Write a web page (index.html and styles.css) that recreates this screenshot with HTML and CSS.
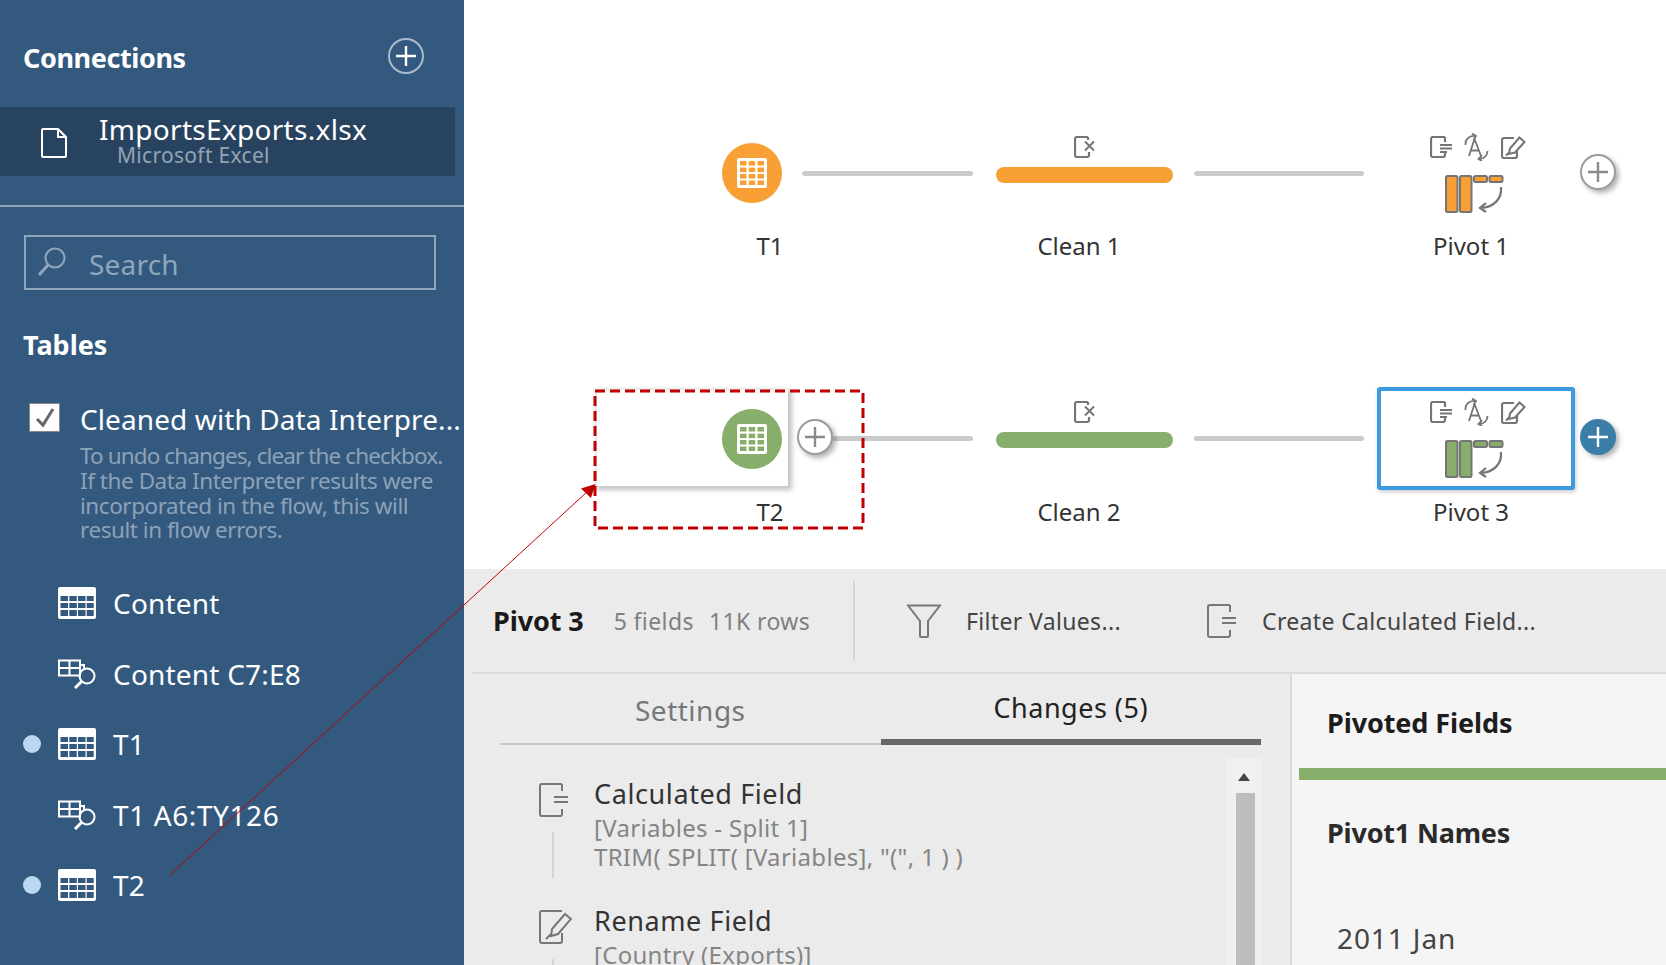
FILE: index.html
```html
<!DOCTYPE html>
<html lang="en">
<head>
  <meta charset="UTF-8" />
  <title>Flow - Pivot 3</title>
  <link rel="stylesheet" href="styles.css">
</head>
<body>
  <svg class="defs" width="0" height="0">
    <symbol id="i-grid" viewBox="0 0 30 30">
      <rect width="30" height="30" rx="2" fill="#fff"/>
      <g fill="currentColor">
        <rect x="3" y="3" width="6.5" height="4.5"/><rect x="11.7" y="3" width="6.5" height="4.5"/><rect x="20.5" y="3" width="6.5" height="4.5"/>
        <rect x="3" y="9.6" width="6.5" height="4.5"/><rect x="11.7" y="9.6" width="6.5" height="4.5"/><rect x="20.5" y="9.6" width="6.5" height="4.5"/>
        <rect x="3" y="16" width="6.5" height="4.5"/><rect x="11.7" y="16" width="6.5" height="4.5"/><rect x="20.5" y="16" width="6.5" height="4.5"/>
        <rect x="3" y="22.5" width="6.5" height="4.5"/><rect x="11.7" y="22.5" width="6.5" height="4.5"/><rect x="20.5" y="22.5" width="6.5" height="4.5"/>
      </g>
    </symbol>
    <symbol id="i-table" viewBox="0 0 38 32">
      <rect width="38" height="32" rx="2" fill="#fff"/>
      <g fill="#34597f">
        <rect x="2.5" y="9" width="7.5" height="5"/><rect x="11.3" y="9" width="7.5" height="5"/><rect x="20" y="9" width="7.5" height="5"/><rect x="28.7" y="9" width="7" height="5"/>
        <rect x="2.5" y="16" width="7.5" height="5"/><rect x="11.3" y="16" width="7.5" height="5"/><rect x="20" y="16" width="7.5" height="5"/><rect x="28.7" y="16" width="7" height="5"/>
        <rect x="2.5" y="23" width="7.5" height="6"/><rect x="11.3" y="23" width="7.5" height="6"/><rect x="20" y="23" width="7.5" height="6"/><rect x="28.7" y="23" width="7" height="6"/>
      </g>
    </symbol>
    <symbol id="i-range" viewBox="0 0 38 30">
      <g fill="none" stroke="#fff" stroke-width="2">
        <path d="M1 1.500h21v15H1zM1 9h21M11.500 1.500v15"/>
        <path d="M22 6h4v3"/>
        <circle cx="29" cy="17" r="7.500"/>
        <path d="M23.500 22.500L17 29" stroke-width="3"/>
      </g>
    </symbol>
    <symbol id="i-calc" viewBox="0 0 22 22">
      <path d="M15 1H3a2 2 0 0 0-2 2v16a2 2 0 0 0 2 2h10a2 2 0 0 0 2-2v-2M15 1v5" fill="none" stroke="currentColor" stroke-width="2.200"/>
      <path d="M10 9h12M10 12.500h12M10 16h7" fill="none" stroke="currentColor" stroke-width="1.800"/>
    </symbol>
    <symbol id="i-clean" viewBox="0 0 22 22">
      <path d="M14 1H3a2 2 0 0 0-2 2v16a2 2 0 0 0 2 2h10a2 2 0 0 0 2-2v-3M14 1v3" fill="none" stroke="currentColor" stroke-width="2.200"/>
      <path d="M11 5.500l9 9M20 5.500l-9 9" fill="none" stroke="currentColor" stroke-width="2"/>
    </symbol>
    <symbol id="i-case" viewBox="0 0 25 28">
      <g fill="none" stroke="currentColor" stroke-width="1.800">
        <path d="M5 23L10.500 6 17 23M7 17.500h8"/>
        <path d="M1.500 12C1 7 4.500 2.500 11 3M8 0.500L12 3 9.500 6.500"/>
        <path d="M23.500 18c0 4-3 8-8 8M18 22.500L14.500 26l3.500 2"/>
      </g>
    </symbol>
    <symbol id="i-edit" viewBox="0 0 25 23">
      <path d="M13 2H3a2 2 0 0 0-2 2v16a2 2 0 0 0 2 2h11a2 2 0 0 0 2-2v-5" fill="none" stroke="currentColor" stroke-width="2.200"/>
      <path d="M9 12.500L18.500 1.500l5 4.500L14 16.500l-6 1.500zM5 19.500l3-3" fill="none" stroke="currentColor" stroke-width="2"/>
    </symbol>
    <symbol id="i-pivot" viewBox="0 0 60 38">
      <g fill="currentColor" stroke="#757575" stroke-width="2">
        <rect x="1" y="1" width="11.500" height="36" rx="1.500"/>
        <rect x="15" y="1" width="11.500" height="36" rx="1.500"/>
        <rect x="29" y="1" width="13" height="6" rx="1.500"/>
        <rect x="44.500" y="1" width="13" height="6" rx="1.500"/>
      </g>
      <path d="M56 12c1 12-7 20-20 21M41 28l-6 5 6 4" fill="none" stroke="#757575" stroke-width="2.200"/>
    </symbol>
    <symbol id="i-plus" viewBox="0 0 36 36">
      <path d="M18 8v20M8 18h20" fill="none" stroke="currentColor" stroke-width="2.400"/>
    </symbol>
  </svg>

  <div class="app">
    <aside class="sidebar">
      <div class="side-head">
        <span class="side-title">Connections</span>
        <span class="round-add"><svg width="36" height="36"><use href="#i-plus"/></svg></span>
      </div>
      <div class="conn-row">
        <svg class="file-icon" width="26" height="30" viewBox="0 0 26 30">
          <path d="M2 1h15l8 8v19a1 1 0 0 1-1 1H2a1 1 0 0 1-1-1V2a1 1 0 0 1 1-1zM17 1v8h8" fill="none" stroke="#fff" stroke-width="2"/>
        </svg>
        <div class="conn-text">
          <div class="conn-name">ImportsExports.xlsx</div>
          <div class="conn-type">Microsoft Excel</div>
        </div>
      </div>
      <div class="side-line"></div>
      <div class="search">
        <svg width="28" height="30" viewBox="0 0 28 30">
          <circle cx="17" cy="11" r="9.500" fill="none" stroke="#8fa6bc" stroke-width="2"/>
          <path d="M10 18L1 28" fill="none" stroke="#8fa6bc" stroke-width="3"/>
        </svg>
        <span>Search</span>
      </div>
      <div class="side-title tables-title">Tables</div>
      <div class="interpreter">
        <span class="checkbox">
          <svg width="20" height="20" viewBox="0 0 20 20"><path d="M2 11l6 6L18 1" fill="none" stroke="#666" stroke-width="3"/></svg>
        </span>
        <div class="interp-text">
          <div class="interp-name">Cleaned with Data Interpre...</div>
          <div class="interp-note"><span class="tight">To undo changes, clear the checkbox.</span><br>If the Data Interpreter results were<br>incorporated in the flow, this will<br>result in flow errors.</div>
        </div>
      </div>
      <ul class="tables">
        <li><span class="dot off"></span><svg width="38" height="32"><use href="#i-table"/></svg>Content</li>
        <li><span class="dot off"></span><svg width="38" height="30"><use href="#i-range"/></svg>Content C7:E8</li>
        <li><span class="dot"></span><svg width="38" height="32"><use href="#i-table"/></svg>T1</li>
        <li class="wide"><span class="dot off"></span><svg width="38" height="30"><use href="#i-range"/></svg>T1 A6:TY126</li>
        <li><span class="dot"></span><svg width="38" height="32"><use href="#i-table"/></svg>T2</li>
      </ul>
    </aside>

    <main class="main">
      <section class="canvas">
        <!-- row 1 -->
        <div class="circle orange c-t1"><svg width="30" height="30"><use href="#i-grid"/></svg></div>
        <div class="link l1 r1"></div>
        <svg class="step-icon clean-ic r1-ic" width="22" height="22"><use href="#i-clean"/></svg>
        <div class="bar orange r1-bar"></div>
        <div class="link l2 r1"></div>
        <div class="step-icons r1-ic">
          <svg width="22" height="22"><use href="#i-calc"/></svg>
          <svg width="25" height="28" class="case"><use href="#i-case"/></svg>
          <svg width="25" height="23"><use href="#i-edit"/></svg>
        </div>
        <svg class="pivot-ic p-orange r1-piv" width="60" height="38"><use href="#i-pivot"/></svg>
        <div class="add r1-add"><svg width="36" height="36"><use href="#i-plus"/></svg></div>
        <div class="node-label lb-t r1-lb">T1</div>
        <div class="node-label lb-c r1-lb">Clean 1</div>
        <div class="node-label lb-p r1-lb">Pivot 1</div>

        <!-- row 2 -->
        <div class="t2-card"></div>
        <div class="circle green c-t2"><svg width="30" height="30"><use href="#i-grid"/></svg></div>
        <div class="link l0 r2"></div>
        <div class="add t2-add"><svg width="36" height="36"><use href="#i-plus"/></svg></div>
        <svg class="step-icon clean-ic r2-ic" width="22" height="22"><use href="#i-clean"/></svg>
        <div class="bar green r2-bar"></div>
        <div class="link l2 r2"></div>
        <div class="pivot-box"></div>
        <div class="step-icons r2-ic">
          <svg width="22" height="22"><use href="#i-calc"/></svg>
          <svg width="25" height="28" class="case"><use href="#i-case"/></svg>
          <svg width="25" height="23"><use href="#i-edit"/></svg>
        </div>
        <svg class="pivot-ic p-green r2-piv" width="60" height="38"><use href="#i-pivot"/></svg>
        <div class="add blue r2-add"><svg width="36" height="36"><use href="#i-plus"/></svg></div>
        <div class="node-label lb-t r2-lb">T2</div>
        <div class="node-label lb-c r2-lb">Clean 2</div>
        <div class="node-label lb-p r2-lb">Pivot 3</div>
      </section>

      <section class="panel">
        <div class="panel-head">
          <div class="pivot-info">
            <span class="pivot-name">Pivot 3</span>
            <span class="pivot-meta">5 fields</span>
            <span class="pivot-meta rows">11K rows</span>
          </div>
          <div class="tool filter">
            <svg width="34" height="34" viewBox="0 0 34 34">
              <path d="M1 1.500h32L21 17v15a1 1 0 0 1-1 1h-6a1 1 0 0 1-1-1V17z" fill="none" stroke="#777" stroke-width="2"/>
            </svg>
            Filter Values...
          </div>
          <div class="tool">
            <svg width="30" height="34" viewBox="0 0 30 34">
              <path d="M23 1H3a2 2 0 0 0-2 2v28a2 2 0 0 0 2 2h18a2 2 0 0 0 2-2v-5M23 1v7" fill="none" stroke="#777" stroke-width="2"/>
              <path d="M15 14h14M15 19h14" fill="none" stroke="#777" stroke-width="2"/>
            </svg>
            Create Calculated Field...
          </div>
        </div>
        <div class="panel-body">
          <div class="changes">
            <div class="tabs">
              <div class="tab">Settings</div>
              <div class="tab active">Changes (5)</div>
            </div>
            <div class="change-wrap">
              <div class="change-list">
                <div class="change">
                  <div class="change-ic">
                    <svg width="30" height="34" viewBox="0 0 30 34">
                      <path d="M23 1H3a2 2 0 0 0-2 2v28a2 2 0 0 0 2 2h18a2 2 0 0 0 2-2v-5M23 1v7" fill="none" stroke="#777" stroke-width="2"/>
                      <path d="M15 14h14M15 19h14" fill="none" stroke="#777" stroke-width="2"/>
                    </svg>
                    <span class="stem"></span>
                  </div>
                  <div>
                    <div class="change-name">Calculated Field</div>
                    <div class="change-info">[Variables - Split 1]<br>TRIM( SPLIT( [Variables], "(", 1 ) )</div>
                  </div>
                </div>
                <div class="change">
                  <div class="change-ic">
                    <svg width="33" height="34" viewBox="0 0 33 34">
                      <path d="M23 1H3a2 2 0 0 0-2 2v28a2 2 0 0 0 2 2h18a2 2 0 0 0 2-2v-8" fill="none" stroke="#777" stroke-width="2"/>
                      <path d="M13 19L26 4l6 5-13 15-7 2zM7 29l5-5" fill="none" stroke="#777" stroke-width="2"/>
                    </svg>
                    <span class="stem"></span>
                  </div>
                  <div>
                    <div class="change-name">Rename Field</div>
                    <div class="change-info">[Country (Exports)]</div>
                  </div>
                </div>
              </div>
              <div class="scroll">
                <span class="scroll-up"></span>
                <span class="scroll-thumb"></span>
              </div>
            </div>
          </div>
          <div class="pivoted">
            <div class="pivoted-title">Pivoted Fields</div>
            <div class="pivoted-bar"></div>
            <div class="pivoted-names">Pivot1 Names</div>
            <div class="pivoted-value">2011 Jan</div>
          </div>
        </div>
      </section>
    </main>

    <!-- red callout drawn on top of the screenshot -->
    <svg class="callout" width="1666" height="965">
      <rect x="595" y="391" width="268" height="137" fill="none" stroke="#c00000" stroke-width="3" stroke-dasharray="10 5"/>
      <path d="M169 876L588 491" stroke="#c00000" stroke-width="1"/>
      <path d="M595.500 484L581 488.500 591 498z" fill="#c00000"/>
    </svg>
  </div>
</body>
</html>
```

FILE: styles.css
```css
body {
  margin: 0;
  overflow: hidden;
  font-family: "Noto Sans", "Open Sans", sans-serif;
  background: #fff;
}
.defs {
  position: absolute;
}
.app {
  position: relative;
  display: flex;
  width: 1666px;
  height: 965px;
  overflow: hidden;
}

/* left side */
.sidebar {
  width: 464px;
  flex: none;
  background: #34597f;
  color: #fff;
}
.side-head {
  display: flex;
  justify-content: space-between;
  align-items: center;
  height: 107px;
  padding: 8px 40px 0 23px;
  box-sizing: border-box;
}
.side-title {
  font-size: 27px;
  font-weight: 700;
  letter-spacing: -0.4px;
}
.round-add {
  display: block;
  width: 36px;
  height: 36px;
  margin-bottom: 3px;
  border: 2px solid #a9bccd;
  border-radius: 50%;
  box-sizing: border-box;
  color: #fff;
}
.round-add svg {
  display: block;
  margin: -2px;
}
.conn-row {
  display: flex;
  align-items: center;
  width: 455px;
  height: 69px;
  background: #28435f;
}
.file-icon {
  margin-left: 41px;
  margin-top: 2px;
}
.conn-text {
  margin-left: 32px;
}
.conn-name {
  font-size: 28px;
  line-height: 30px;
  letter-spacing: 0.3px;
  margin-top: -3px;
}
.conn-type {
  font-size: 21px;
  line-height: 22px;
  margin: 0 0 0 18px;
  letter-spacing: 0.3px;
  color: #93a3b5;
}
.side-line {
  height: 2px;
  margin-top: 29px;
  background: #8da3b8;
}
.search {
  display: flex;
  align-items: center;
  width: 412px;
  height: 55px;
  margin: 28px 0 0 24px;
  padding: 2px 0 0 12px;
  border: 2px solid #8fa6bc;
  box-sizing: border-box;
  font-size: 28px;
  color: #8fa6bc;
}
.search svg {
  margin-top: -3px;
}
.search span {
  margin-left: 23px;
  letter-spacing: 0.2px;
}
.tables-title {
  margin: 35px 0 0 23px;
  line-height: 40px;
  letter-spacing: 0;
}
.interpreter {
  display: flex;
  margin: 38px 0 0 29px;
}
.checkbox {
  display: flex;
  align-items: center;
  justify-content: center;
  flex: none;
  width: 31px;
  height: 29px;
  background: #fff;
  border: 1px solid #888;
  box-sizing: border-box;
}
.interp-text {
  margin-left: 20px;
}
.interp-name {
  font-size: 28px;
  line-height: 32px;
  white-space: nowrap;
  letter-spacing: 0.1px;
}
.interp-note {
  margin-top: 9px;
  font-size: 22.500px;
  line-height: 24.800px;
  letter-spacing: -0.45px;
  color: #8ca2b8;
  white-space: nowrap;
}
.tight {
  letter-spacing: -0.9px;
}
.tables {
  list-style: none;
  margin: 25px 0 0;
  padding: 0 0 0 23px;
}
.tables li {
  display: flex;
  align-items: center;
  height: 70.400px;
  font-size: 28px;
  letter-spacing: 0.2px;
}
.tables li.wide {
  letter-spacing: 0.6px;
}
.tables li svg {
  margin-right: 17px;
}
.dot {
  flex: none;
  width: 18px;
  height: 18px;
  margin-right: 17px;
  border-radius: 50%;
  background: #bcd8f0;
}
.dot.off {
  background: none;
}

/* flow canvas */
.main {
  flex: 1;
  display: flex;
  flex-direction: column;
  min-width: 0;
}
.canvas {
  position: relative;
  height: 569px;
  flex: none;
  background: #fff;
}
.circle {
  position: absolute;
  display: flex;
  align-items: center;
  justify-content: center;
  width: 60px;
  height: 60px;
  border-radius: 50%;
}
.orange { background: #f8a035; color: #f8a035; }
.green { background: #87ae6b; color: #87ae6b; }
.c-t1 { left: 258px; top: 143px; }
.c-t2 { left: 258px; top: 409px; }
.link {
  position: absolute;
  height: 5px;
  border-radius: 3px;
  background: #cbcbcb;
}
.l0 { left: 369px; width: 140px; }
.l1 { left: 338px; width: 171px; }
.l2 { left: 730px; width: 170px; }
.r1 { top: 171px; }
.r2 { top: 436px; }
.bar {
  position: absolute;
  left: 532px;
  width: 177px;
  height: 16px;
  border-radius: 8px;
}
.r1-bar { top: 167px; }
.r2-bar { top: 432px; }
.step-icon, .step-icons, .pivot-ic {
  position: absolute;
  color: #757575;
}
.clean-ic { left: 610px; }
.step-icons {
  display: flex;
  gap: 12px;
  left: 966px;
}
.step-icons svg {
  flex: none;
}
.step-icons .case {
  margin-top: -3px;
}
.r1-ic { top: 136px; }
.r2-ic { top: 401px; }
.pivot-ic { left: 981px; }
.r1-piv { top: 175px; }
.r2-piv { top: 440px; }
.p-orange { color: #f8a035; }
.p-green { color: #87ae6b; }
.add {
  position: absolute;
  width: 36px;
  height: 36px;
  border: 2px solid #9c9c9c;
  border-radius: 50%;
  box-sizing: border-box;
  background: #fff;
  color: #8a8a8a;
  box-shadow: 3px 3px 5px rgba(0,0,0,0.3);
}
.add svg {
  display: block;
  margin: -2px;
}
.add.blue {
  background: #3b7ea8;
  border-color: #3b7ea8;
  color: #fff;
}
.r1-add { left: 1116px; top: 154px; }
.r2-add { left: 1116px; top: 419px; }
.t2-add { left: 333px; top: 419px; }
.node-label {
  position: absolute;
  width: 140px;
  text-align: center;
  font-size: 24px;
  line-height: 30px;
  color: #333;
}
.lb-t { left: 236px; }
.lb-c { left: 545px; }
.lb-p { left: 937px; }
.r1-lb { top: 231px; }
.r2-lb { top: 497px; }
.t2-card {
  position: absolute;
  left: 133px;
  top: 390px;
  width: 191px;
  height: 96px;
  background: #fff;
  box-shadow: 2px 2px 5px 2px rgba(0,0,0,0.24);
}
.pivot-box {
  position: absolute;
  left: 913px;
  top: 387px;
  width: 198px;
  height: 103px;
  box-sizing: border-box;
  border: 4px solid #3d9ae0;
  border-radius: 3px;
  background: #fff;
  box-shadow: 1px 2px 4px rgba(0,0,0,0.2);
}

/* bottom panel */
.panel {
  flex: 1;
  display: flex;
  flex-direction: column;
  min-height: 0;
  background: #ebebeb;
}
.panel-head {
  display: flex;
  align-items: center;
  height: 105px;
  flex: none;
  box-sizing: border-box;
  margin-left: 8px;
  padding-left: 21px;
  border-bottom: 2px solid #dcdcdc;
}
.pivot-info {
  display: flex;
  align-items: center;
  width: 362px;
  height: 80px;
  flex: none;
  box-sizing: border-box;
  border-right: 2px solid #d6d6d6;
}
.pivot-name {
  font-size: 27px;
  font-weight: 700;
  letter-spacing: -0.1px;
  color: #1a1a1a;
}
.pivot-meta {
  margin-left: 30px;
  font-size: 23px;
  letter-spacing: 0.4px;
  color: #808080;
}
.pivot-meta.rows {
  margin-left: 15px;
}
.tool {
  display: flex;
  align-items: center;
  gap: 25px;
  font-size: 23px;
  letter-spacing: 0.35px;
  color: #444;
}
.filter {
  width: 300px;
  flex: none;
  margin-left: 52px;
}
.panel-body {
  flex: 1;
  display: flex;
  min-height: 0;
}
.changes {
  width: 826px;
  flex: none;
  overflow: hidden;
}
.tabs {
  display: flex;
  height: 71px;
  margin-left: 36px;
  width: 761px;
}
.tab {
  flex: 1;
  box-sizing: border-box;
  border-bottom: 2px solid #c8c8c8;
  text-align: center;
  font-size: 28px;
  line-height: 72px;
  letter-spacing: 0.5px;
  color: #777;
}
.tab.active {
  border-bottom: 6px solid #666;
  line-height: 67px;
  font-size: 27px;
  color: #222;
}
.change-wrap {
  display: flex;
  margin-top: 13px;
}
.change-list {
  width: 763px;
  flex: none;
  padding: 19px 0 0 75px;
  box-sizing: border-box;
}
.change {
  display: flex;
  gap: 25px;
  margin-bottom: 26px;
}
.change-ic {
  display: flex;
  flex-direction: column;
  align-items: flex-start;
  width: 30px;
  flex: none;
  padding-top: 6px;
}
.stem {
  display: block;
  width: 2px;
  height: 46px;
  margin: 15px 0 0 13px;
  background: #d4d4d4;
}
.change-name {
  font-size: 27px;
  line-height: 34px;
  letter-spacing: 0.6px;
  color: #333;
}
.change-info {
  margin-top: 2px;
  font-size: 24px;
  line-height: 29px;
  letter-spacing: 0.3px;
  color: #858585;
  white-space: nowrap;
}
.scroll {
  position: relative;
  width: 34px;
  height: 210px;
  flex: none;
  background: #f0f0f0;
}
.scroll-up {
  position: absolute;
  left: 11px;
  top: 15px;
  border-left: 6px solid transparent;
  border-right: 6px solid transparent;
  border-bottom: 8px solid #444;
}
.scroll-thumb {
  position: absolute;
  left: 9px;
  top: 35px;
  bottom: 0;
  width: 19px;
  background: #bdbdbd;
}
.pivoted {
  flex: 1;
  box-sizing: border-box;
  border-left: 2px solid #dcdcdc;
  background: #f5f5f5;
}
.pivoted-title {
  margin: 31px 0 0 35px;
  font-size: 27px;
  line-height: 36px;
  font-weight: 700;
  letter-spacing: -0.1px;
  color: #1c1c1c;
}
.pivoted-bar {
  height: 12px;
  margin: 27px 0 0 7px;
  background: #87ae6b;
}
.pivoted-names {
  margin: 35px 0 0 35px;
  font-size: 27px;
  line-height: 36px;
  font-weight: 700;
  letter-spacing: -0.2px;
  color: #2a2a2a;
}
.pivoted-value {
  margin: 69px 0 0 45px;
  font-size: 28px;
  line-height: 36px;
  letter-spacing: 0.9px;
  color: #444;
}
.callout {
  position: absolute;
  left: 0;
  top: 0;
  pointer-events: none;
}
```
